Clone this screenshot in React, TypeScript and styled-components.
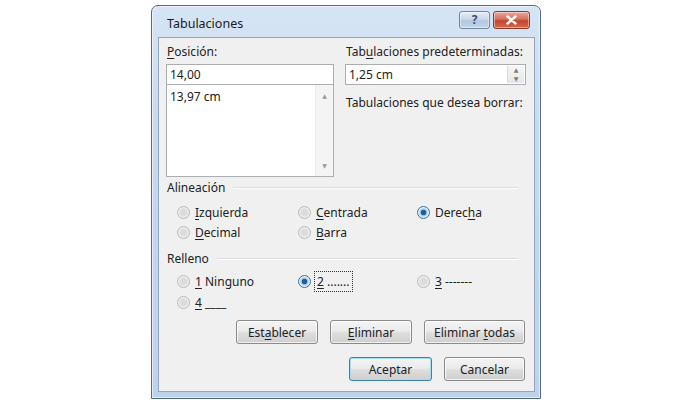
import React from 'react';
import styled, { createGlobalStyle } from 'styled-components';

const GlobalStyle = createGlobalStyle`
  html, body {
    margin: 0;
    padding: 0;
    background: #fff;
  }
  body {
    width: 700px;
    height: 400px;
    overflow: hidden;
    font-family: "Noto Sans", "Open Sans", "DejaVu Sans", sans-serif;
    font-size: 12px;
    color: #222;
  }
`;

const Page = styled.div`
  padding: 5px 0 0 151px;
`;

const Window = styled.div`
  width: 390px;
  height: 394px;
  box-sizing: border-box;
  border: 1px solid #56697f;
  border-radius: 7px 7px 0 0;
  background: linear-gradient(180deg, #d6e5f5 0%, #c6daef 30%, #bdd3ec 100%);
  box-shadow: inset 0 0 0 1px rgba(255, 255, 255, 0.55);
  padding: 0 5px 6px 6px;
  display: flex;
  flex-direction: column;
`;

const TitleBar = styled.div`
  height: 31px;
  display: flex;
  align-items: center;
  padding-left: 9px;
`;

const Title = styled.div`
  flex: 1;
  font-size: 12.5px;
  color: #1a1a1a;
  padding-top: 4px;
`;

const Caption = styled.div<{ $kind: 'help' | 'close' }>`
  width: ${p => (p.$kind === 'close' ? '37px' : '31px')};
  height: 18px;
  margin-right: ${p => (p.$kind === 'close' ? '5px' : '3px')};
  margin-bottom: 4px;
  box-sizing: border-box;
  border: 1px solid ${p => (p.$kind === 'close' ? '#8a3a30' : '#6f86a0')};
  border-radius: 3px;
  display: flex;
  align-items: center;
  justify-content: center;
  background: ${p =>
    p.$kind === 'close'
      ? 'linear-gradient(180deg, #e9a99a 0%, #d7705c 45%, #c4452c 55%, #d46a4e 100%)'
      : 'linear-gradient(180deg, #e6eef8 0%, #c9d8ea 45%, #b2c6de 55%, #c5d6ea 100%)'};
  box-shadow: inset 0 0 0 1px rgba(255, 255, 255, 0.45);
  color: ${p => (p.$kind === 'close' ? '#fff' : '#3d4f66')};
  font-size: 12px;
  font-weight: 700;
`;

const Content = styled.div`
  flex: 1;
  background: #f0f0f0;
  border: 1px solid #93a7bf;
  padding: 6px 8px 0 7px;
  display: flex;
  flex-direction: column;
`;

const TopGrid = styled.div`
  display: grid;
  grid-template-columns: 168px 181px;
  column-gap: 11px;
`;

const Column = styled.div`
  display: flex;
  flex-direction: column;
`;

const Label = styled.div<{ $gap?: number }>`
  line-height: 15px;
  padding-left: 1px;
  margin-top: ${p => p.$gap ?? 0}px;
  margin-bottom: 5px;
  white-space: nowrap;
`;

const Key = styled.span`
  text-decoration: underline;
  text-underline-offset: 2px;
`;

const TextBox = styled.div`
  height: 21px;
  box-sizing: border-box;
  border: 1px solid #abadb3;
  background: #fff;
  display: flex;
  align-items: center;
  padding-left: 3px;
`;

const Spin = styled.div`
  margin-left: auto;
  width: 16px;
  height: 17px;
  margin-right: 1px;
  display: flex;
  flex-direction: column;
  justify-content: space-around;
  align-items: center;
  border-left: 1px solid #d9d9d9;
  background: linear-gradient(180deg, #f6f6f6, #e6e6e6);
  color: #7a7a7a;
  font-size: 6px;
  line-height: 6px;
`;

const ListBox = styled.div`
  height: 92px;
  box-sizing: border-box;
  border: 1px solid #abadb3;
  border-top: none;
  background: #fff;
  display: flex;
`;

const ListItems = styled.div`
  flex: 1;
  padding: 3px 0 0 3px;
`;

const ScrollBar = styled.div`
  width: 17px;
  background: #f4f4f4;
  border-left: 1px solid #ececec;
  display: flex;
  flex-direction: column;
  justify-content: space-between;
  align-items: center;
  padding: 7px 0 6px;
  color: #9a9a9a;
  font-size: 6px;
`;

const GroupHeader = styled.div<{ $top: number }>`
  display: flex;
  align-items: center;
  gap: 8px;
  margin-top: ${p => p.$top}px;
  padding-left: 1px;
  line-height: 15px;

  &::after {
    content: '';
    flex: 1;
    height: 0;
    border-top: 1px solid #dcdcdc;
    border-bottom: 1px solid #fff;
    margin-right: 8px;
  }
`;

const RadioGrid = styled.div<{ $top: number; $row: number }>`
  display: grid;
  grid-template-columns: 121px 119px 110px;
  grid-auto-rows: ${p => p.$row}px;
  margin-top: ${p => p.$top}px;
  padding-left: 11px;
`;

const RadioItem = styled.div`
  display: flex;
  align-items: center;
  gap: 5px;
  white-space: nowrap;
`;

const RadioDot = styled.span<{ $on?: boolean }>`
  width: 13px;
  height: 13px;
  box-sizing: border-box;
  border-radius: 50%;
  border: 1px solid ${p => (p.$on ? '#3a6f9d' : '#b9b9b9')};
  background: ${p =>
    p.$on
      ? 'radial-gradient(circle, #1f5f99 0 2.5px, #8fc1e6 3px, #e8f2fa 5px)'
      : 'radial-gradient(circle, #dcdcdc 0 3px, #eeeeee 5px)'};
  flex-shrink: 0;
`;

const Focus = styled.span`
  outline: 1px dotted #333;
  outline-offset: 1px;
  padding: 0 1px;
`;

const ButtonRow = styled.div<{ $top: number }>`
  display: flex;
  justify-content: flex-end;
  gap: 12px;
  margin-top: ${p => p.$top}px;
  padding-right: 1px;
`;

const Button = styled.div<{ $w: number; $default?: boolean }>`
  width: ${p => p.$w}px;
  height: 24px;
  box-sizing: border-box;
  border: 1px solid ${p => (p.$default ? '#3c7fb1' : '#8a8a8a')};
  border-radius: 3px;
  background: linear-gradient(180deg, #f4f4f4 0%, #ebebeb 45%, #dddddd 55%, #cfcfcf 100%);
  box-shadow: inset 0 0 0 1px ${p => (p.$default ? '#a8dbf5' : 'rgba(255,255,255,0.7)')};
  display: flex;
  align-items: center;
  justify-content: center;
  color: #222;
  white-space: nowrap;
`;

export default function App() {
  return (
    <>
      <GlobalStyle />
      <Page>
        <Window>
          <TitleBar>
            <Title>Tabulaciones</Title>
            <Caption $kind="help">?</Caption>
            <Caption $kind="close">
              <svg width="11" height="10" viewBox="0 0 11 10">
                <path d="M1.5 1.5 L9.5 8.5 M9.5 1.5 L1.5 8.5" stroke="#fff" strokeWidth="2.4" strokeLinecap="round" />
              </svg>
            </Caption>
          </TitleBar>
          <Content>
            <TopGrid>
              <Column>
                <Label><Key>P</Key>osición:</Label>
                <TextBox>14,00</TextBox>
                <ListBox>
                  <ListItems>13,97 cm</ListItems>
                  <ScrollBar>
                    <span>▲</span>
                    <span>▼</span>
                  </ScrollBar>
                </ListBox>
              </Column>
              <Column>
                <Label>Tab<Key>u</Key>laciones predeterminadas:</Label>
                <TextBox>
                  <span>1,25 cm</span>
                  <Spin>
                    <span>▲</span>
                    <span>▼</span>
                  </Spin>
                </TextBox>
                <Label $gap={10}>Tabulaciones que desea borrar:</Label>
              </Column>
            </TopGrid>

            <GroupHeader $top={3}>Alineación</GroupHeader>
            <RadioGrid $top={7} $row={20}>
              <RadioItem><RadioDot /><span><Key>I</Key>zquierda</span></RadioItem>
              <RadioItem><RadioDot /><span><Key>C</Key>entrada</span></RadioItem>
              <RadioItem><RadioDot $on /><span>Derec<Key>h</Key>a</span></RadioItem>
              <RadioItem><RadioDot /><span><Key>D</Key>ecimal</span></RadioItem>
              <RadioItem><RadioDot /><span><Key>B</Key>arra</span></RadioItem>
            </RadioGrid>

            <GroupHeader $top={9}>Relleno</GroupHeader>
            <RadioGrid $top={5} $row={21}>
              <RadioItem><RadioDot /><span><Key>1</Key> Ninguno</span></RadioItem>
              <RadioItem><RadioDot $on /><Focus><Key>2</Key> .......</Focus></RadioItem>
              <RadioItem><RadioDot /><span><Key>3</Key> -------</span></RadioItem>
              <RadioItem><RadioDot /><span><Key>4</Key> ____</span></RadioItem>
            </RadioGrid>

            <ButtonRow $top={7}>
              <Button $w={82}><span>Est<Key>a</Key>blecer</span></Button>
              <Button $w={82}><span><Key>E</Key>liminar</span></Button>
              <Button $w={101}><span>Eliminar <Key>t</Key>odas</span></Button>
            </ButtonRow>
            <ButtonRow $top={13}>
              <Button $w={83} $default>Aceptar</Button>
              <Button $w={81}>Cancelar</Button>
            </ButtonRow>
          </Content>
        </Window>
      </Page>
    </>
  );
}
